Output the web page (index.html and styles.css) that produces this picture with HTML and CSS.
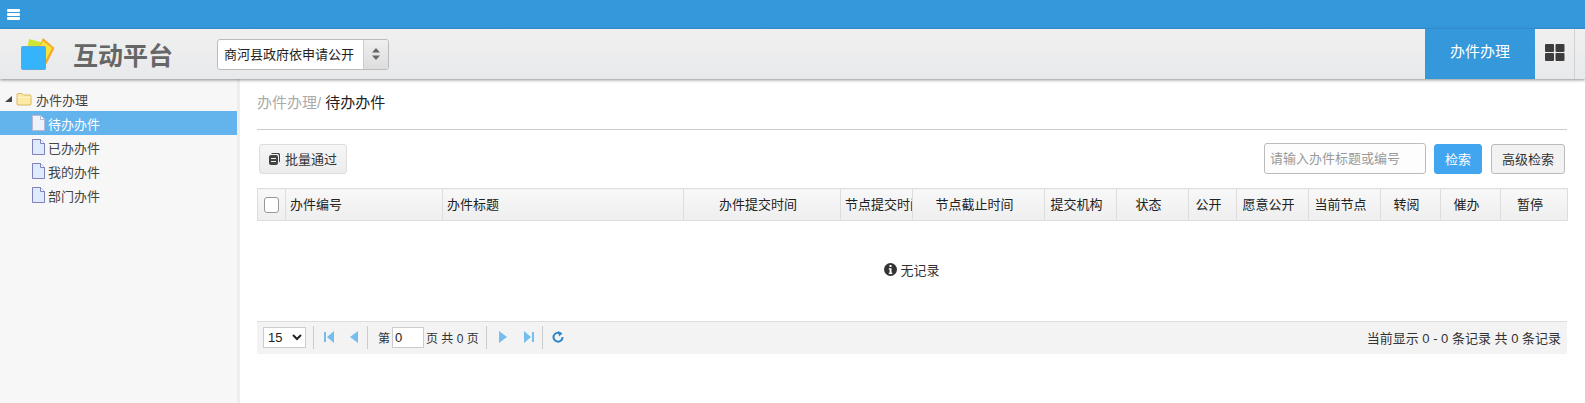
FILE: index.html
```html
<!DOCTYPE html>
<html lang="zh-CN">
<head>
<meta charset="utf-8">
<title>互动平台</title>
<link rel="stylesheet" href="styles.css">
</head>
<body>
<div class="topbar">
  <svg class="menu-icon" width="13" height="11" viewBox="0 0 13 11"><path d="M1 0h11a1 1 0 0 1 1 1v1a1 1 0 0 1-1 1H1a1 1 0 0 1-1-1V1a1 1 0 0 1 1-1zM1 4h11a1 1 0 0 1 1 1v1a1 1 0 0 1-1 1H1a1 1 0 0 1-1-1V5a1 1 0 0 1 1-1zM1 8h11a1 1 0 0 1 1 1v1a1 1 0 0 1-1 1H1a1 1 0 0 1-1-1V9a1 1 0 0 1 1-1z" fill="#fff"/></svg>
</div>
<header class="header">
  <svg class="logo" width="36" height="34" viewBox="0 0 36 34">
    <path d="M9 2 28 7 25 27 5 23z" fill="#cfe534"/>
    <path d="M23 1 34.500 11 26.500 27 18 12z" fill="#f4a92a"/>
    <path d="M23 4 32 11 25.500 24 18 12z" fill="#f5e23c"/>
    <rect x="1.500" y="9.500" width="24" height="23" rx="1" fill="#35b4fb" stroke="#62a7d6"/>
  </svg>
  <div class="brand">互动平台</div>
  <div class="select-box">
    <span class="select-text">商河县政府依申请公开</span>
    <span class="select-arrow">
      <svg width="8" height="12" viewBox="0 0 8 12"><path d="M4 0 8 4.500H0zM4 12 0 7.500h8z" fill="#666"/></svg>
    </span>
  </div>
  <div class="header-space"></div>
  <div class="nav-tab">办件办理</div>
  <div class="nav-grid">
    <svg width="20" height="17" viewBox="0 0 20 17"><g fill="#3d3d3d"><rect width="9" height="8" rx="1"/><rect x="10.500" width="9" height="8" rx="1"/><rect y="9" width="9" height="8" rx="1"/><rect x="10.500" y="9" width="9" height="8" rx="1"/></g></svg>
  </div>
  <div class="nav-end"></div>
</header>
<main class="main">
  <aside class="sidebar">
    <div class="tree-root">
      <svg class="tree-arrow" width="7" height="7" viewBox="0 0 7 7"><path d="M7 0V6H0z" fill="#444"/></svg>
      <svg class="tree-folder" width="16" height="13" viewBox="0 0 16 13"><path d="M1 2.500V1.500a1 1 0 0 1 1-1h4l1.500 1.500H14a1 1 0 0 1 1 1v8a1 1 0 0 1-1 1H2a1 1 0 0 1-1-1z" fill="#fbe9a4" stroke="#d8b863"/><path d="M1.500 4.500h13" stroke="#fff6cf"/></svg>
      <span>办件办理</span>
    </div>
    <div class="tree-item active">
      <svg class="tree-file" width="13" height="16" viewBox="0 0 13 16"><path d="M.5.500h8l4 4v11H.5z" fill="#eef2fb" stroke="#b8b8d0"/><path d="M8.500.5v4h4" fill="#fff" stroke="#b8b8d0"/></svg>
      <span>待办办件</span>
    </div>
    <div class="tree-item">
      <svg class="tree-file" width="13" height="16" viewBox="0 0 13 16"><path d="M.5.500h8l4 4v11H.5z" fill="#dfeafc" stroke="#7b83b8"/><path d="M8.500.5v4h4" fill="#fff" stroke="#7b83b8"/></svg>
      <span>已办办件</span>
    </div>
    <div class="tree-item">
      <svg class="tree-file" width="13" height="16" viewBox="0 0 13 16"><path d="M.5.500h8l4 4v11H.5z" fill="#dfeafc" stroke="#7b83b8"/><path d="M8.500.5v4h4" fill="#fff" stroke="#7b83b8"/></svg>
      <span>我的办件</span>
    </div>
    <div class="tree-item">
      <svg class="tree-file" width="13" height="16" viewBox="0 0 13 16"><path d="M.5.500h8l4 4v11H.5z" fill="#dfeafc" stroke="#7b83b8"/><path d="M8.500.5v4h4" fill="#fff" stroke="#7b83b8"/></svg>
      <span>部门办件</span>
    </div>
  </aside>
  <section class="content">
    <div class="crumbs"><span class="crumb-parent">办件办理/</span> <span class="crumb-current">待办办件</span></div>
    <div class="toolbar">
      <button class="btn btn-batch">
        <svg width="11" height="12" viewBox="0 0 11 12"><path d="M3 0h6.500A1.500 1.500 0 0 1 11 1.500V8a1.500 1.500 0 0 1-1 1.400V2.500A1.500 1.500 0 0 0 8.500 1H2.200A1.500 1.500 0 0 1 3 0z" fill="#444"/><rect y="2" width="9" height="10" rx="2" fill="#444"/><path d="M2 5.500h5M2 8.500h5" stroke="#eee"/></svg>
        批量通过
      </button>
      <div class="toolbar-space"></div>
      <input class="search" type="text" placeholder="请输入办件标题或编号">
      <button class="btn btn-search">检索</button>
      <button class="btn btn-adv">高级检索</button>
    </div>
    <table class="grid">
      <colgroup>
        <col class="c28"><col class="c157"><col class="c241"><col class="c157"><col class="c72"><col class="c132"><col class="c72"><col class="c72"><col class="c48"><col class="c72"><col class="c72"><col class="c60"><col class="c60"><col class="c67">
      </colgroup>
      <thead>
        <tr>
          <th class="check"><span class="checkbox"></span></th>
          <th class="left">办件编号</th>
          <th class="left">办件标题</th>
          <th>办件提交时间</th>
          <th>节点提交时间</th>
          <th>节点截止时间</th>
          <th>提交机构</th>
          <th>状态</th>
          <th>公开</th>
          <th>愿意公开</th>
          <th>当前节点</th>
          <th>转阅</th>
          <th>催办</th>
          <th>暂停</th>
        </tr>
      </thead>
    </table>
    <div class="empty">
      <svg width="13" height="13" viewBox="0 0 13 13"><circle cx="6.500" cy="6.500" r="6.500" fill="#333"/><rect x="5.500" y="2" width="2" height="2" fill="#fff"/><path d="M4.800 5.300H7.500V9.800H8.300V11H4.800V9.800H5.600V6.500H4.800z" fill="#fff"/></svg>
      <span>无记录</span>
    </div>
    <div class="pager">
      <select class="page-size"><option>15</option></select>
      <span class="sep"></span>
      <svg class="pg-first" width="12" height="12" viewBox="0 0 12 12"><path d="M1 1h2v10H1zM11 0v12L4 6z" fill="#74bdec"/></svg>
      <svg class="pg-prev" width="8" height="12" viewBox="0 0 8 12"><path d="M8 0v12L0 6z" fill="#74bdec"/></svg>
      <span class="sep sep-wide"></span>
      <span>第</span>
      <input class="page-input" type="text" value="0">
      <span>页 共 0 页</span>
      <span class="sep"></span>
      <svg class="pg-next" width="8" height="12" viewBox="0 0 8 12"><path d="M0 0v12L8 6z" fill="#74bdec"/></svg>
      <svg class="pg-last" width="12" height="12" viewBox="0 0 12 12"><path d="M1 0v12L8 6zM9 1h2v10H9z" fill="#74bdec"/></svg>
      <span class="sep"></span>
      <svg class="pg-refresh" width="12" height="12" viewBox="0 0 12 12"><path d="M8.600 2.500A4.500 4.500 0 1 0 10.500 6" fill="none" stroke="#2a87c8" stroke-width="2"/><path d="M6 0l4.500 2.500L7 5.500z" fill="#2a87c8"/></svg>
      <div class="pager-space"></div>
      <span class="pager-info">当前显示 0 - 0 条记录 共 0 条记录</span>
    </div>
  </section>
</main>
</body>
</html>
```
FILE: styles.css
```css
* { box-sizing: border-box; }
html, body { margin: 0; height: 100%; overflow: hidden; }
body {
  display: flex;
  flex-direction: column;
  font-family: "Liberation Sans", "Noto Sans CJK SC", sans-serif;
  font-size: 13px;
  color: #333;
  background: #fff;
}
.topbar {
  height: 29px;
  flex: none;
  background: #3498db;
  display: flex;
  align-items: center;
  padding: 0 0 1px 7px;
}
.menu-icon { display: block; }
.header {
  height: 50px;
  flex: none;
  display: flex;
  align-items: center;
  background: linear-gradient(#f0f0f0, #e8e9eb);
  box-shadow: 0 1px 3px rgba(0, 0, 0, .45);
  position: relative;
  z-index: 2;
}
.logo { margin-left: 20px; flex: none; }
.brand {
  margin-left: 17px;
  width: 144px;
  padding-top: 3px;
  font-size: 25px;
  font-weight: 700;
  color: #666;
  line-height: 50px;
}
.select-box {
  width: 172px;
  height: 31px;
  display: flex;
  border: 1px solid #bbb;
  border-radius: 3px;
  background: #fff;
  overflow: hidden;
}
.select-text {
  flex: 1;
  padding-left: 6px;
  font-size: 13px;
  line-height: 30px;
  color: #222;
  white-space: nowrap;
}
.select-arrow {
  width: 25px;
  display: flex;
  align-items: center;
  justify-content: center;
  border-left: 1px solid #ccc;
  background: linear-gradient(#efefef, #ddd);
}
.header-space { flex: 1; }
.nav-tab {
  width: 110px;
  height: 50px;
  background: #3498db;
  color: #fff;
  font-size: 15px;
  line-height: 46px;
  text-align: center;
}
.nav-grid {
  width: 40px;
  height: 50px;
  display: flex;
  align-items: center;
  justify-content: center;
  padding-bottom: 3px;
  border-right: 1px solid #d2d2d2;
}
.nav-end { width: 10px; height: 50px; }
.main { flex: 1; display: flex; min-height: 0; }
.sidebar {
  width: 240px;
  flex: none;
  padding-top: 8px;
  background: #f7f7f7;
  border-right: 3px solid #eee;
  color: #444;
}
.tree-root, .tree-item {
  height: 24px;
  display: flex;
  align-items: center;
  white-space: nowrap;
}
.tree-root { padding-left: 5px; }
.tree-arrow { margin-right: 4px; }
.tree-folder { margin-right: 4px; }
.tree-item { padding-left: 32px; }
.tree-file { margin-right: 3px; }
.tree-item.active { background: #63b3ed; color: #fff; }
.content { flex: 1; min-width: 0; padding-left: 17px; padding-right: 18px; }
.crumbs {
  height: 51px;
  padding-top: 14px;
  border-bottom: 1px solid #ccc;
  font-size: 15px;
  line-height: 20px;
}
.crumb-parent { color: #aaa; }
.crumb-current { color: #222; }
.toolbar {
  display: flex;
  align-items: center;
  height: 31px;
  margin-top: 13px;
  padding: 0 2px;
}
.toolbar-space { flex: 1; }
.btn {
  font: inherit;
  height: 30px;
  border-radius: 3px;
  border: 1px solid #ccc;
  background: #f2f2f2;
  color: #333;
  padding: 0;
}
.btn-batch {
  width: 88px;
  display: flex;
  align-items: center;
  justify-content: center;
  gap: 5px;
  border-color: #ddd;
  background: linear-gradient(#f6f6f6, #ececec);
}
.search {
  width: 162px;
  height: 31px;
  border: 1px solid #bbb;
  border-radius: 3px;
  padding: 0 5px;
  font: inherit;
  background: #fdfdfd;
}
.search::placeholder { color: #999; opacity: 1; }
.btn-search {
  width: 48px;
  margin-left: 8px;
  background: #42a5f0;
  border-color: #42a5f0;
  color: #fff;
}
.btn-adv {
  width: 74px;
  margin-left: 9px;
  border-color: #bbb;
}
.grid {
  width: 100%;
  margin-top: 14px;
  table-layout: fixed;
  border-collapse: collapse;
}
.c28 { width: 28px; }
.c157 { width: 157px; }
.c241 { width: 241px; }
.c72 { width: 72px; }
.c132 { width: 132px; }
.c48 { width: 48px; }
.c60 { width: 60px; }
.c67 { width: 67px; }
.grid th {
  height: 32px;
  padding: 0 12px 3px 4px;
  border: 1px solid #ddd;
  border-width: 1px 0 1px 1px;
  background: linear-gradient(#f8f8f8, #eee);
  font-weight: 400;
  color: #222;
  white-space: nowrap;
  overflow: hidden;
  text-align: center;
}
.grid th:last-child { border-right: 1px solid #ddd; }
.grid th.left { text-align: left; }
.grid th.check { padding: 0 0 0 6px; text-align: left; }
.checkbox {
  display: block;
  width: 15px;
  height: 16px;
  border: 1px solid #999;
  border-radius: 3px;
  background: #fff;
}
.empty {
  height: 100px;
  display: flex;
  align-items: center;
  justify-content: center;
  gap: 3px;
  padding-bottom: 3px;
}
.pager {
  height: 33px;
  display: flex;
  align-items: center;
  padding: 0 6px 2px 6px;
  background: #f3f3f3;
  border-top: 1px solid #ddd;
  font-size: 12px;
  color: #333;
}
.page-size {
  width: 43px;
  height: 21px;
  border: 1px solid #ccc;
  background: #fff;
  font: 13px "Liberation Sans", sans-serif;
  color: #222;
}
.sep {
  width: 1px;
  height: 23px;
  background: #ccc;
  margin: 0 7px;
}
.sep-wide { margin-right: 10px; }
.pg-first { margin-left: 2px; margin-right: 15px; }
.pg-prev { margin-right: 2px; }
.page-input {
  width: 32px;
  height: 21px;
  margin: 0 2px 0 2px;
  padding: 0 2px;
  border: 1px solid #ccc;
  font: 13px "Liberation Sans", sans-serif;
  color: #222;
}
.pg-next { margin-left: 5px; margin-right: 16px; }
.pg-refresh { margin-left: 2px; }
.pager-space { flex: 1; }
.pager-info { font-size: 13px; }
```
